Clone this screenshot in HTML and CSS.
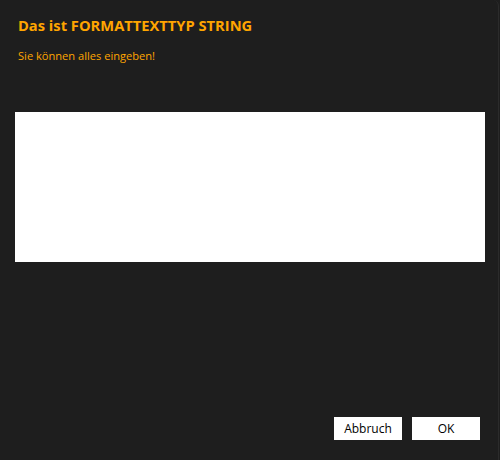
FILE: index.html
```html
<!DOCTYPE html>
<html lang="de">
<head>
<meta charset="utf-8">
<link rel="stylesheet" href="styles.css">
</head>
<body>
<div class="dialog">
  <h1 class="title">Das ist FORMATTEXTTYP STRING</h1>
  <p class="hint">Sie können alles eingeben!</p>
  <div class="input"></div>
  <div class="actions">
    <button class="btn">Abbruch</button>
    <button class="btn">OK</button>
  </div>
</div>
</body>
</html>
```
FILE: styles.css
```css
html, body {
  margin: 0;
  padding: 0;
  background: #1e1e1e;
}
.dialog {
  width: 499px;
  height: 460px;
  box-sizing: border-box;
  background: #1e1e1e;
  border-right: 1px solid #2b2b2b;
  border-top-right-radius: 6px;
  display: flex;
  flex-direction: column;
  font-family: "Open Sans", "Noto Sans", sans-serif;
}
.title {
  margin: 15px 0 0 18px;
  font-size: 14.7px;
  font-weight: 700;
  line-height: 20px;
  color: #ffa500;
}
.hint {
  margin: 13px 0 0 18px;
  font-size: 11.1px;
  line-height: 15px;
  color: #ffa500;
}
.input {
  margin: 49px 0 0 15px;
  width: 470px;
  height: 150px;
  background: #ffffff;
}
.actions {
  margin: 155px 0 0 334px;
  display: flex;
  gap: 10px;
}
.btn {
  width: 68px;
  height: 23px;
  border: none;
  background: #ffffff;
  padding: 0;
  font-family: "Open Sans", "Noto Sans", sans-serif;
  font-size: 12px;
  color: #000;
}
```
